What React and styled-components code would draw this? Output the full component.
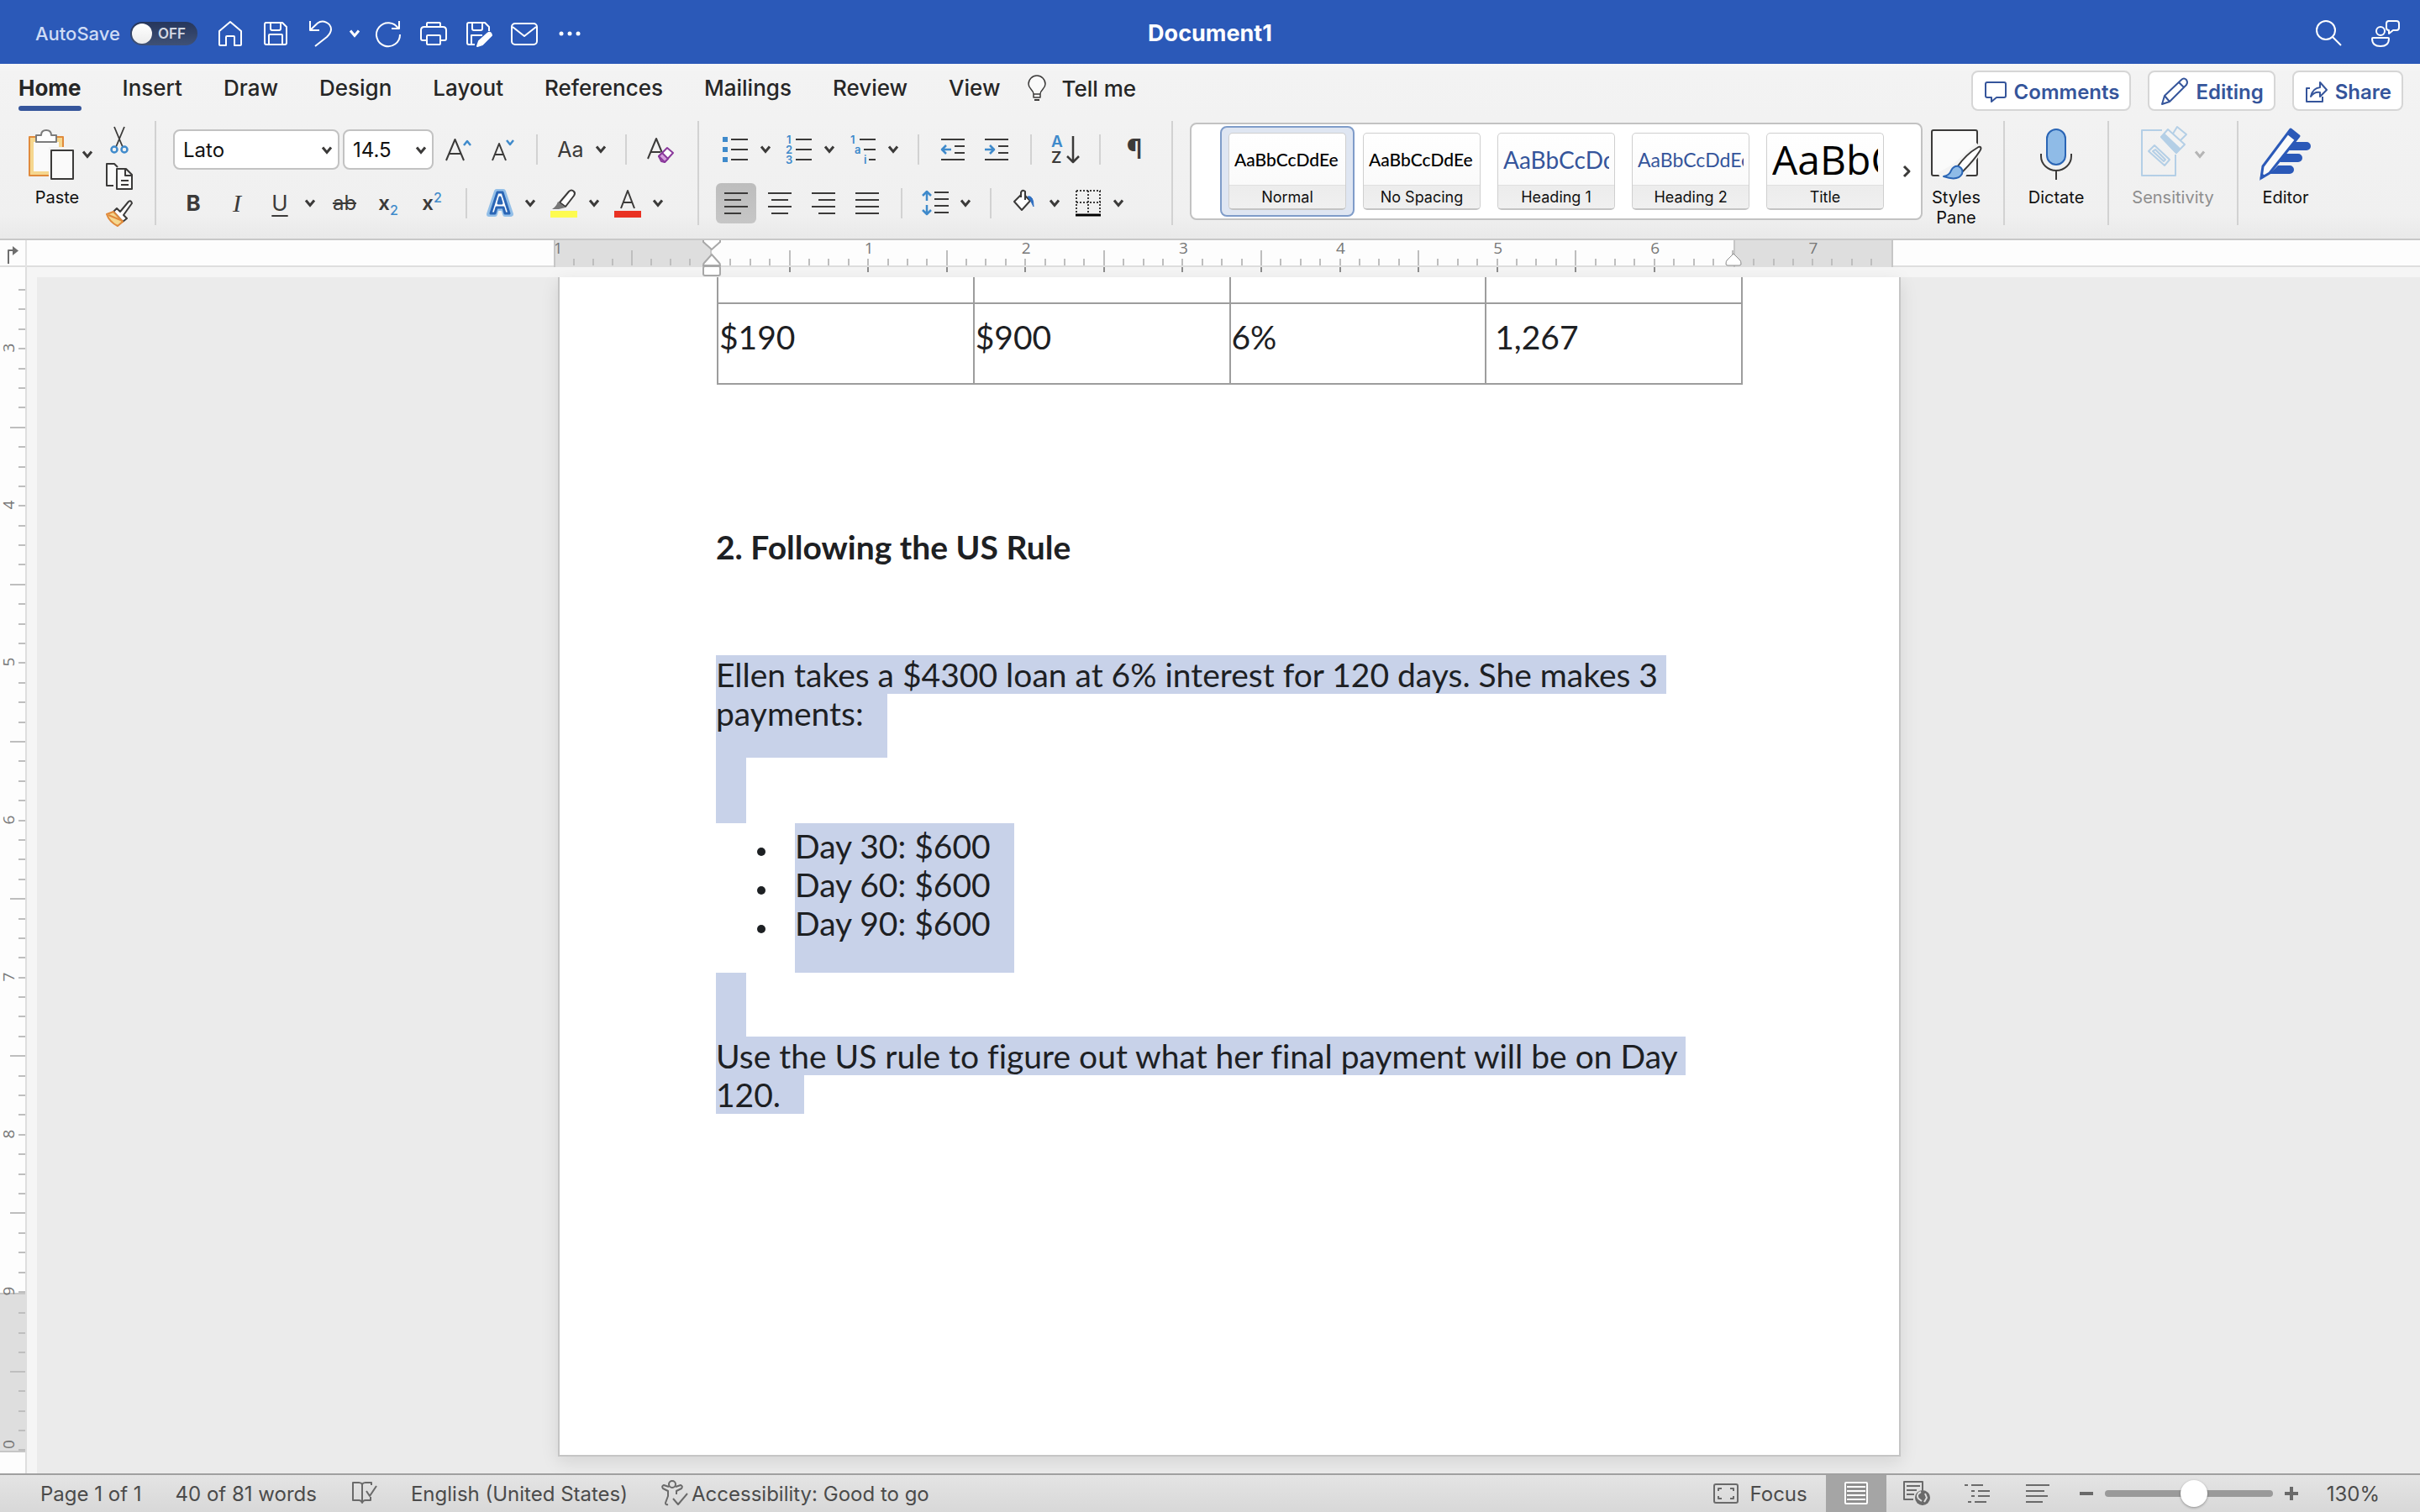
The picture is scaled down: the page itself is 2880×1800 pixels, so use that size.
import React from "react";
import styled, { createGlobalStyle, css } from "styled-components";

const ui = `Inter, "Liberation Sans", sans-serif`;
const doc = `Lato, "Open Sans", sans-serif`;
const ink = "#3b3a39";
const sky = "#3f8acb";
const navy = "#35559b";

const Global = createGlobalStyle`
  * { box-sizing: border-box; }
  html, body { margin: 0; }
  body { font-family: ${ui}; color: #262626; background: #ebebeb; }
  button { font: inherit; color: inherit; background: none; border: 0; padding: 0; cursor: pointer; }
  svg { display: block; flex: none; fill: none; overflow: visible; }
  p, h1, h2, ul { margin: 0; padding: 0; }
`;

const Shell = styled.div`
  height: 100vh;
  display: flex;
  flex-direction: column;
  overflow: hidden;
`;

/* ---------- title bar ---------- */
const TitleBar = styled.header`
  height: 76px;
  flex: none;
  padding: 4px 14px 0;
  display: grid;
  grid-template-columns: 1fr auto 1fr;
  align-items: center;
  background: #2b59b8;
  color: #fff;
`;
const QuickBar = styled.div`
  padding-left: 28px;
  display: flex;
  align-items: center;
`;
const AccountBar = styled.div`
  display: flex;
  justify-content: flex-end;
  gap: 14px;
`;
const DocTitle = styled.h1`
  font-size: 27px;
  line-height: 32px;
  font-weight: 700;
`;
const BarButton = styled.button`
  width: ${(p) => (p.$narrow ? 26 : 54)}px;
  height: 48px;
  display: flex;
  align-items: center;
  justify-content: center;
`;
const AutoSave = styled.label`
  display: flex;
  align-items: center;
  gap: 12px;
  margin-right: 12px;
  font-size: 22px;
  font-weight: 500;
  color: #cfdcf5;
  position: relative;
  input { position: absolute; opacity: 0; margin: 0; }
`;
const Track = styled.span`
  width: 80px;
  height: 28px;
  border-radius: 14px;
  padding-left: 2px;
  display: flex;
  align-items: center;
  gap: 7px;
  background: linear-gradient(#26365b, #3f5176);
  font-size: 17px;
  font-weight: 600;
  color: #d3d8e2;
`;
const Knob = styled.span`
  width: 24px;
  height: 24px;
  border-radius: 50%;
  background: linear-gradient(#fff, #ececec);
`;

/* ---------- ribbon ---------- */
const Ribbon = styled.section`
  flex: none;
  background: linear-gradient(#f7f7f7 0, #f3f3f3 10px, #f0f0f0 180px, #e9e9e9);
  border-bottom: 2px solid #c8c8c8;
`;
const TabRow = styled.div`
  height: 68px;
  padding: 0 20px 4px 22px;
  display: flex;
  justify-content: space-between;
  align-items: center;
`;
const Tabs = styled.nav`
  align-self: flex-start;
  display: flex;
  gap: 49px;
`;
const Tab = styled.button`
  height: 56px;
  padding-top: 13px;
  display: flex;
  flex-direction: column;
  justify-content: space-between;
  font-size: 26px;
  line-height: 32px;
  font-weight: ${(p) => (p.$active ? 700 : 500)};
  &::after {
    content: "";
    width: 100%;
    height: 6px;
    border-radius: 3px;
    background: ${(p) => (p.$active ? navy : "transparent")};
  }
`;
const TellMe = styled.button`
  height: 56px;
  padding-top: 2px;
  margin-left: -16px;
  display: flex;
  align-items: center;
  gap: 18px;
  font-size: 26px;
  font-weight: 500;
`;
const Actions = styled.div`
  display: flex;
  gap: 20px;
`;
const ActionButton = styled.button`
  height: 48px;
  padding: 2px 12px 0 14px;
  display: flex;
  align-items: center;
  gap: 9px;
  border: 2px solid #d6d6d6;
  border-radius: 8px;
  background: #fff;
  color: ${navy};
  font-size: 24px;
  font-weight: 600;
`;
const Tools = styled.div`
  height: 140px;
  display: flex;
  align-items: flex-start;
`;
const Rule = styled.span`
  flex: none;
  width: 2px;
  height: ${(p) => (p.$tall ? 124 : 36)}px;
  margin: 0 ${(p) => p.$gap ?? 14}px;
  background: #d2d2d2;
`;
const Clipboard = styled.div`
  width: 184px;
  padding: 6px 26px 0 34px;
  display: flex;
  justify-content: space-between;
`;
const SmallStack = styled.div`
  display: flex;
  flex-direction: column;
  gap: 12px;
`;
const SmallButton = styled.button`
  width: 32px;
  height: 32px;
`;
const Paste = styled.button`
  padding-top: 4px;
  width: 76px;
  display: flex;
  flex-direction: column;
  gap: 9px;
`;
const PasteTop = styled.span`
  display: flex;
  align-items: center;
  gap: 10px;
`;
const Caption = styled.span`
  font-size: 20px;
  line-height: 24px;
  color: #111;
  width: ${(p) => (p.$w ? p.$w + "px" : "auto")};
  text-align: center;
`;
const Group = styled.div`
  padding: 10px 18px 0;
  display: flex;
  flex-direction: column;
  gap: 16px;
`;
const Row = styled.div`
  height: 48px;
  display: flex;
  align-items: center;
`;
const IconButton = styled.button`
  width: 48px;
  height: 48px;
  margin: 0 2px;
  display: flex;
  align-items: center;
  justify-content: center;
  border-radius: 6px;
  color: ${ink};
  font-size: 26px;
  ${(p) => p.$on && css`background: linear-gradient(#bdbdbd, #c6c6c6);`}
`;
const Drop = styled.button`
  width: 76px;
  height: 48px;
  display: flex;
  align-items: center;
  justify-content: center;
  gap: 14px;
  color: ${ink};
`;
const Glyph = styled.span`
  width: 32px;
  text-align: center;
  font-size: ${(p) => p.$size ?? 26}px;
  line-height: 32px;
  font-weight: ${(p) => p.$weight ?? 400};
  font-family: ${(p) => (p.$serif ? `"Liberation Serif", serif` : "inherit")};
  font-style: ${(p) => (p.$serif ? "italic" : "normal")};
  text-decoration: ${(p) => p.$line ?? "none"};
  text-decoration-thickness: 2px;
  text-underline-offset: 5px;
  white-space: nowrap;
  sub, sup { font-size: 16px; line-height: 0; color: ${sky}; font-weight: 500; }
`;
const SelectBox = styled.label`
  position: relative;
  width: ${(p) => p.$w}px;
  height: 48px;
  margin-left: ${(p) => (p.$first ? 2 : 4)}px;
  margin-right: ${(p) => (p.$first ? 0 : 4)}px;
  select {
    width: 100%;
    height: 100%;
    appearance: none;
    border: 2px solid #c2c2c2;
    border-radius: 8px;
    background: #fff;
    padding: 0 10px;
    font: 400 24px ${ui};
    color: #111;
  }
  svg { position: absolute; right: 9px; top: 20px; pointer-events: none; }
`;

/* ---------- style gallery ---------- */
const Gallery = styled.div`
  height: 116px;
  margin: 2px 0 0 20px;
  padding-left: 34px;
  display: flex;
  align-items: center;
  border: 2px solid #c2c2c2;
  border-radius: 8px;
  background: #fff;
`;
const StyleButton = styled.button`
  width: 160px;
  height: 108px;
  padding: 6px 8px;
  border: 2px solid ${(p) => (p.$on ? "#7f9cc9" : "transparent")};
  border-radius: 8px;
  background: ${(p) => (p.$on ? "#dfe6f2" : "transparent")};
`;
const StyleCard = styled.span`
  height: 92px;
  display: flex;
  flex-direction: column;
  border: 1px solid #cfcfcf;
  border-bottom: 2px solid #c4c4c4;
  border-radius: 5px;
  overflow: hidden;
  background: linear-gradient(#fff, #f8f8f8);
`;
const Sample = styled.span`
  height: 61px;
  margin: 0 6px;
  overflow: hidden;
  white-space: nowrap;
  text-align: left;
  font-family: ${(p) => p.$font ?? doc};
  font-size: ${(p) => p.$size}px;
  line-height: 62px;
  font-weight: ${(p) => p.$weight ?? 400};
  color: ${(p) => p.$color ?? "#000"};
`;
const StyleName = styled.span`
  flex: 1;
  border-top: 1px solid #e0e0e0;
  background: linear-gradient(#ececec, #f0f0f0);
  font-size: 18px;
  line-height: 27px;
  color: #111;
`;
const MoreButton = styled.button`
  width: 34px;
  height: 108px;
  display: flex;
  align-items: center;
  justify-content: center;
`;
const Large = styled.button`
  width: ${(p) => p.$w}px;
  padding-top: 10px;
  display: flex;
  flex-direction: column;
  align-items: center;
  gap: 9px;
  ${(p) => p.$dim && css`${Caption} { color: #8e8e8e; }`}
`;
const LargeTop = styled.span`
  display: flex;
  align-items: center;
  gap: 10px;
`;

/* ---------- rulers ---------- */
const TopRuler = styled.div`
  flex: none;
  display: flex;
  height: 44px;
  background: linear-gradient(#fdfdfd 30px, #dedede 30px, #dedede 32px, #f5f5f5 32px);
`;
const TabWell = styled.button`
  width: 32px;
  height: 32px;
  border-right: 2px solid #e3e3e3;
  padding: 4px 0 0 8px;
`;
const Scale = styled.div`
  flex: 1;
  display: flex;
  justify-content: center;
`;
const HZone = styled.div`
  position: relative;
  flex: 0 0 ${(p) => p.$size}px;
  display: flex;
  height: ${(p) => (p.$shade ? 32 : 44)}px;
  ${(p) => p.$shade && css`
    overflow: hidden;
    border-right: 2px solid #c6c6c6;
    border-left: 2px solid #c6c6c6;
    background: #dedede;
  `}
`;
const HCell = styled.span`
  position: relative;
  flex: 1;
  display: flex;
  flex-direction: column;
  align-items: flex-end;
`;
const HTick = styled.i`
  width: 2px;
  height: ${(p) => (p.$tall ? 18 : 8)}px;
  margin-top: ${(p) => (p.$tall ? 12 : 22)}px;
  background: #bebebe;
`;
const HUnder = styled.i`
  width: 2px;
  height: 6px;
  margin-top: 2px;
  background: #8c8c8c;
`;
const HLabel = styled.b`
  position: absolute;
  top: 0;
  ${(p) => (p.$lead ? "left: 0" : "right: 0")};
  transform: translateX(${(p) => (p.$lead ? -20 : 50)}%);
  font: 400 19px/18px "Open Sans", sans-serif;
  color: #777;
`;
const Indent = styled.svg`
  position: absolute;
  z-index: 2;
  top: 0;
  left: ${(p) => (p.$end ? "100%" : "0")};
  margin-left: -11px;
`;
const Work = styled.div`
  flex: 1;
  min-height: 0;
  display: flex;
`;
const SideRuler = styled.div`
  flex: none;
  width: 44px;
  margin-top: -12px;
  background: linear-gradient(90deg, #fdfdfd 30px, #dedede 30px, #dedede 32px, #f5f5f5 32px);
`;
const VZone = styled.div`
  position: relative;
  width: 30px;
  display: flex;
  flex-direction: column;
  height: ${(p) => p.$size}px;
  z-index: ${(p) => (p.$shade ? 0 : 1)};
  ${(p) => p.$shade && css`
    overflow: hidden;
    border-top: 2px solid #c6c6c6;
    border-bottom: 2px solid #c6c6c6;
    background: #dedede;
  `}
`;
const VCell = styled.span`
  position: relative;
  flex: ${(p) => (p.$first ? `0 0 ${p.$first}px` : 1)};
  display: flex;
  align-items: flex-end;
  justify-content: flex-end;
`;
const VTick = styled.i`
  height: 2px;
  width: ${(p) => (p.$tall ? 18 : 8)}px;
  background: #bebebe;
`;
const VLabel = styled.b`
  position: absolute;
  left: 0;
  bottom: -8px;
  width: 20px;
  height: 20px;
  display: flex;
  justify-content: center;
  transform: rotate(-90deg);
  font: 400 19px/20px "Open Sans", sans-serif;
  color: #777;
`;

function HScale({ start, count, size, shade, lead, children }) {
  return (
    <HZone $size={size} $shade={shade}>
      {lead && <HLabel $lead>{lead}</HLabel>}
      {Array.from({ length: count }, (_, i) => {
        const n = start + i + 1;
        const last = shade && i === count - 1;
        return (
          <HCell key={n}>
            {!last && <HTick $tall={(n + 80) % 8 === 4} />}
            {!shade && n % 4 === 0 && i < count - 1 && <HUnder />}
            {n > 0 && n % 8 === 0 && <HLabel>{n / 8}</HLabel>}
          </HCell>
        );
      })}
      {children}
    </HZone>
  );
}
function VScale({ start, count, size, shade, first }) {
  return (
    <VZone $size={size} $shade={shade}>
      {Array.from({ length: count }, (_, i) => {
        const n = start + i + 1;
        return (
          <VCell key={n} $first={i === 0 ? first : 0}>
            <VTick $tall={n % 8 === 4} />
            {n % 8 === 0 && <VLabel>{n / 8}</VLabel>}
          </VCell>
        );
      })}
    </VZone>
  );
}

/* ---------- page ---------- */
const Canvas = styled.main`
  flex: 1;
  display: flex;
  justify-content: center;
  background: #ebebeb;
  padding: 0 0 20px 2px;
`;
const Sheet = styled.article`
  width: 1598px;
  padding: 0 187px 0 186px;
  border: solid #c5c5c5;
  border-width: 0 2px 2px;
  background: #fff;
  box-shadow: 0 6px 20px rgba(0, 0, 0, 0.1);
  font: 400 39px/46px ${doc};
  font-variant-ligatures: none;
  color: #1d2023;
`;
const Table = styled.table`
  width: 100%;
  margin-left: 1px;
  table-layout: fixed;
  border-collapse: collapse;
  td {
    height: 96px;
    padding: 16px 0 32px 1px;
    border: 2px solid #9d9d9d;
    vertical-align: top;
  }
  td:last-child { padding-left: 10px; }
  tr:first-child td { height: 31px; padding: 0; border-top: 0; }
`;
const Heading = styled.h2`
  margin: 170px 0 106px;
  font-size: 39px;
  line-height: 46px;
  font-weight: 700;
`;
const Sel = styled.span`
  display: block;
  width: fit-content;
  background: #c8d2e9;
  white-space: pre;
  padding-right: ${(p) => (p.$end ? 28 : 0)}px;
  padding-bottom: ${(p) => (p.$after ? 30 : 0)}px;
`;
const Blank = styled.p`
  width: 36px;
  height: ${(p) => p.$h}px;
  background: #c8d2e9;
`;
const List = styled.ul`
  margin-left: 94px;
  width: fit-content;
  padding: 4px 28px 36px 0;
  background: #c8d2e9;
  li { list-style: none; display: flex; align-items: center; }
  li::before {
    content: "";
    width: 10px;
    height: 10px;
    margin: 13px 35px 0 -45px;
    border-radius: 50%;
    background: #1d2023;
  }
`;

/* ---------- status bar ---------- */
const Status = styled.footer`
  flex: none;
  height: 46px;
  padding: 0 48px;
  display: flex;
  justify-content: space-between;
  border-top: 2px solid #a0a0a0;
  background: linear-gradient(#e4e4e4, #d8d8d8);
  color: #4b4b4b;
  font-size: 24px;
`;
const StatusSide = styled.div`
  display: flex;
  align-items: center;
  gap: ${(p) => p.$gap}px;
`;
const StatusButton = styled.button`
  display: flex;
  align-items: center;
  gap: ${(p) => p.$gap ?? 0}px;
  padding-right: ${(p) => p.$pad ?? 0}px;
`;
const ViewButton = styled.button`
  width: 72px;
  height: 44px;
  display: flex;
  align-items: center;
  justify-content: center;
  background: ${(p) => (p.$on ? "#a5a5a5" : "none")};
`;
const ZoomBox = styled.div`
  display: flex;
  align-items: center;
  gap: 14px;
  margin-left: 14px;
`;
const Slider = styled.input`
  width: 200px;
  height: 32px;
  margin: 0;
  appearance: none;
  background: none;
  &::-webkit-slider-runnable-track {
    height: 8px;
    border-radius: 4px;
    background: #9a9a9a;
  }
  &::-webkit-slider-thumb {
    appearance: none;
    width: 32px;
    height: 32px;
    margin-top: -12px;
    border-radius: 50%;
    background: #fff;
    box-shadow: 0 1px 3px rgba(0, 0, 0, 0.35);
  }
`;
const ZoomValue = styled.button`
  margin-left: 34px;
`;

/* ---------- icons ---------- */
const Chev = ({ c = ink }) => (
  <svg width="12" height="10" viewBox="0 0 12 10" stroke={c} strokeWidth="3">
    <path d="M1 1.5 6 7.5 11 1.5" />
  </svg>
);
const Ico = ({ w = 32, h = 32, s = ink, sw = 2, children }) => (
  <svg width={w} height={h} viewBox={`0 0 ${w} ${h}`} stroke={s} strokeWidth={sw} strokeLinejoin="round">
    {children}
  </svg>
);
const Home = () => <Ico s="#fff"><path d="M3 13 16 2 29 13V29Q29 30 28 30H21V20Q21 19 20 19H12Q11 19 11 20V30H4Q3 30 3 29Z" /></Ico>;
const Save = () => <Ico s="#fff"><path d="M4 3H24L29 8V27Q29 29 27 29H5Q3 29 3 27V5Q3 3 5 3ZM10 3V10Q10 12 12 12H20Q22 12 22 10V3M8 29V18Q8 17 9 17H23Q24 17 24 18V29" /></Ico>;
const Undo = () => <Ico s="#fff"><path d="M3 1V12H14M3 12 12 3.500C18-1 28 3 28 11 28 15 26 17 23 20L9 31" /></Ico>;
const Redo = () => <Ico s="#fff"><path d="M29 1V10H20M28 10A14 14 0 1 0 30 17" /></Ico>;
const Print = () => <Ico s="#fff"><path d="M8 8V4Q8 3 9 3H23Q24 3 24 4V8M8 24H3Q1 24 1 22V12Q1 8 5 8H27Q31 8 31 12V22Q31 24 29 24H24M9 18H23Q24 18 24 19V28Q24 29 23 29H9Q8 29 8 28V19Q8 18 9 18Z" /></Ico>;
const SavePen = () => <Ico s="#fff"><path d="M11 29H4Q2 29 2 27V5Q2 3 4 3H23L28 8V13M8 3V10Q8 12 10 12H18Q20 12 20 10V3M7 29V18H20" /><path fill="#fff" d="M26 16Q30 13 31 18L20 29 14 31 16 25Z" /></Ico>;
const Mail = () => <Ico w={34}><g stroke="#fff"><rect x="2" y="4" width="30" height="25" rx="4" /><path d="M3 8 17 19 31 8" /></g></Ico>;
const Dots = () => <Ico w={26} h={8} s="none"><g fill="#fff"><circle cx="3" cy="4" r="2.500" /><circle cx="13" cy="4" r="2.500" /><circle cx="23" cy="4" r="2.500" /></g></Ico>;
const Search = () => <Ico s="#fff"><circle cx="13" cy="12" r="11" /><path d="M21 20 31 30" /></Ico>;
const Person = () => <Ico w={34} s="#fff"><circle cx="11" cy="13" r="5" /><path d="M1 22Q1 21 2 21H20Q21 21 21 22 21 31 11 31 1 31 1 22ZM20 1H30Q33 1 33 4V9Q33 12 30 12H26L21 16V12Q18 12 18 9V4Q18 1 21 1Z" /></Ico>;
const Bulb = () => <Ico w={22} h={32}><path fill="#fafafa" strokeWidth="1.500" d="M7 23C7 18 1 17 1 11A10 10 0 0 1 21 11C21 17 15 18 15 23V27H7ZM7 23H15" /><path d="M8 30H14" /></Ico>;
const CommentIcon = () => <Ico w={26} h={28} s={navy}><path d="M3 3H23Q25 3 25 5V19Q25 21 23 21H14L8 26V21H3Q1 21 1 19V5Q1 3 3 3Z" /></Ico>;
const PencilIcon = () => <Ico w={32} h={34} s={navy}><path d="M1 32 4 22 24 3Q27 0 30 3 32 6 30 9L10 29ZM4 22 10 29M21 6 27 12" /></Ico>;
const ShareIcon = () => <Ico w={26} h={28} s={navy}><path d="M5 10H1V26H20V20M6 20Q8 10 17 9V3L25 12 17 20V15Q10 14 6 20Z" /></Ico>;
const PasteIcon = () => (
  <Ico w={54} h={60}>
    <path d="M1 9H41V55H1Z" fill="#f5d78f" stroke="#e08a3c" /><path d="M6 15H36V50H6Z" fill="#fafafa" stroke="none" />
    <path d="M9 15V7H15Q15 1 21 1T27 7H33V15Z" fill="#fff" stroke="#7c7c7c" />
    <path d="M24 21H54V60H24Z" fill="#f3f3f3" stroke="none" /><path d="M27 25H53V59H27Z" fill="#fafafa" />
  </Ico>
);
const Cut = () => <Ico><path d="M10 1 20 25M22 1 12 25" strokeWidth="1.800" /><g stroke={sky} strokeWidth="2.500"><circle cx="10" cy="28" r="3.500" /><circle cx="22" cy="28" r="3.500" /></g></Ico>;
const Copy = () => <Ico><path d="M9 27H1V1H10L14 5M13 7H24L31 14V31H13ZM23 7V15H31M18 21H27M18 26H27" fill="#fafafa" /></Ico>;
const Brush = () => <Ico><path d="M13 10 17 14 27 2Q30 0 31 4L21 18 25 22 20 26 9 14Z" fill="#fff" /><path d="M9 14 20 26 14 31Q4 26 1 17Z" fill="#f5d78f" stroke="#e08a3c" /><path d="M3 18 20 25" stroke="#e08a3c" /></Ico>;
const Lines = ({ rows }) => <Ico w={28} h={28}>{rows.map(([a, b], i) => <path key={i} d={`M${a} ${2 + i * 8}H${b}`} />)}</Ico>;
const Bullets = () => <Ico><path d="M11 4H31M11 16H31M11 28H31" /><path d="M1 1h6v6h-6ZM1 13h6v6h-6ZM1 25h6v6h-6Z" fill={sky} stroke="none" /></Ico>;
const T = styled.text`
  font: 600 ${(p) => p.$s ?? 13}px ${ui};
  fill: ${(p) => p.$c ?? sky};
  stroke: none;
`;
const Numbers = () => <Ico><path d="M12 4H31M12 16H31M12 28H31" /><T x="1" y="9">1</T><T x="0" y="21">2</T><T x="0" y="33">3</T></Ico>;
const Multi = () => <Ico><path d="M12 4H31M17 16H31M23 28H31" /><T x="1" y="9">1</T><T x="6" y="21">a</T><T x="17" y="33">i</T></Ico>;
const Outdent = () => <Ico w={28} h={28}><path d="M0 2H28M16 10H28M16 18H28M0 26H28" /><path d="M12 14H1M6 9 1 14 6 19" stroke={sky} strokeWidth="2.500" /></Ico>;
const IndentIcon = () => <Ico w={28} h={28}><path d="M0 2H28M16 10H28M16 18H28M0 26H28" /><path d="M0 14H11M6 9 11 14 6 19" stroke={sky} strokeWidth="2.500" /></Ico>;
const Sort = () => <Ico w={34} h={34}><T x="0" y="14" $s={19}>A</T><T x="0" y="33" $s={19} $c={ink}>Z</T><path d="M26 1V31M19 25 26 32 33 25" strokeWidth="2.500" /></Ico>;
const Spacing = () => <Ico><path d="M15 3H32M15 11H32M15 19H32M15 27H32" /><path d="M6 13V2M1 7 6 2 11 7M6 18V29M1 24 6 29 11 24" stroke={sky} strokeWidth="2.500" /></Ico>;
const Bucket = () => <Ico><path d="M12 6 4 14 13 24 23 13 17 7" fill="#fff" /><path d="M12 9V3Q14-1 17 2V12" /><path d="M20 8Q27 6 27 20 24 13 20 8Z" fill="#2f6fc1" stroke="#2f6fc1" strokeWidth="1" /></Ico>;
const Borders = () => <Ico><path d="M2 1H31M2 1V27M30 1V27M16 1V27M2 15H31" strokeDasharray="2 2" strokeLinejoin="miter" /><path d="M1 30H31" stroke="#000" strokeWidth="3" /></Ico>;
const BlueA = () => <Ico><path d="M3 29 12 2H20L29 29H22L20 22H12L10 29ZM14 16H18L16 9Z" fill="#fff" stroke="#93bfe8" strokeWidth="6" /><path d="M5 28 13 3H19L27 28H22L20 21H12L10 28ZM14 16H18L16 9Z" fill="#fff" stroke="#2a65b5" strokeWidth="3" /></Ico>;
const Marker = () => <Ico><path d="M11 15 22 2Q25-1 28 2 30 4 28 7L18 20Z" fill="#fff" /><path d="M9 14 18 21 10 23H2Q7 20 9 14Z" fill="#777" stroke="none" /><path d="M0 25H32V33H0Z" fill="#fdfb50" stroke="none" /></Ico>;
const RedA = () => <Ico><path d="M8 22 16 1 24 22M11 15H21" /><path d="M0 25H32V33H0Z" fill="#e93223" stroke="none" /></Ico>;
const Grow = () => <Ico><path d="M1 29 11.500 4 22 29M5 21H18" /><path d="M22 11 26 6 30 11" stroke={sky} strokeWidth="2.500" /></Ico>;
const Shrink = () => <Ico><path d="M4 29 12 9 20 29M7 22H17" /><path d="M21 5 25 10 29 5" stroke={sky} strokeWidth="2.500" /></Ico>;
const Eraser = () => <Ico><path d="M1 27 11 3 18 20M5 19H16" /><path d="M14 24 24 14 31 20 21 31 17 30Z" fill="#fff" stroke="#8b3a9c" /><path d="M14 24 18 20 25 27 21 31Z" fill="#d59fdc" stroke="#8b3a9c" /></Ico>;
const StylesIcon = () => (
  <Ico w={60} h={60}>
    <path d="M3 1H53Q55 1 55 3V53Q55 55 53 55H3Q1 55 1 53V3Q1 1 3 1Z" fill="#fafafa" />
    <path d="M8 52 27 41 54 16 62 24 40 58 12 59Z" fill="#f3f3f3" stroke="none" />
    <path d="M31 45C38 35 48 26 55 22 59 19 61 22 58 26 53 34 45 43 38 50Z" fill="#fff" />
    <path d="M15 56Q22 55 24 49 27 43 33 44 39 47 37 53 32 62 15 56Z" fill="#8fbbe7" stroke="#2a65b5" />
  </Ico>
);
const Mic = () => <Ico w={38} h={60}><rect x="8" y="0" width="22" height="42" rx="11" fill="#8fbbe7" stroke="#2a65b5" /><path d="M1 29V32A18 17 0 0 0 37 32V29M19 49V60" /></Ico>;
const Sens = () => (
  <Ico w={54} h={60} s="#b4cfe6">
    <path d="M25 1H1V55H41V30" /><path d="M9 26 16 19 34 36 28 43ZM14 26 17 24 29 36 27 38Z" />
    <path d="M24 9 32 0 52 18 42 28Z" fill="#f3f3f3" /><path d="M24 9 28 6 46 23 42 28Z" fill="#b4cfe6" /><path d="M38 5 43-3 54 6 47 13" />
  </Ico>
);
const EditorIcon = () => (
  <Ico w={62} h={60} s="none">
    <path d="M40 15H56A5 5 0 0 1 56 25H34ZM30 29H46A5 5 0 0 1 46 39H24ZM22 43H36A5 5 0 0 1 36 53H12Z" fill="#2b59b8" />
    <path d="M37 0 47 8 12 52 2 58 4 44Z" fill="#fafafa" stroke="#2b59b8" strokeWidth="3" /><path d="M37-1 48 8 43 14 33 6ZM2 52 7 55 0 61Z" fill="#2b59b8" />
  </Ico>
);
const gray = "#6a6a6a";
const Book = () => <Ico s={gray}><path d="M10 3H3V24H10Q13 24 14 27 15 24 18 24H24V20M14 27V5Q13 3 10 3M14 5Q15 3 18 3H25V6M19 13 23 19 31 7" /></Ico>;
const Access = () => <Ico s={gray}><circle cx="13" cy="5" r="4" /><path d="M9 8 3 6Q0 7 2 10L8 13V19L5 27Q5 30 8 29M17 8 23 6Q26 7 24 10L18 13V17M14 22 20 29 31 16" /></Ico>;
const FocusIcon = () => <Ico w={30} h={24} s={gray}><rect x="1" y="1" width="28" height="22" rx="2" /><path d="M6 9V6H10M20 6H24V9M24 15V18H20M10 18H6V15" /></Ico>;
const PrintView = () => <Ico w={28} h={28} s="#fff"><rect x="1" y="1" width="26" height="25" rx="1" fill="#8f8f8f" /><path d="M3 6H25M3 11H25M3 16H25M3 21H25" /></Ico>;
const WebView = () => <Ico s={gray}><path d="M12 23H1V2H23V12M4 7H20M4 12H16M4 17H13" /><circle cx="23" cy="21" r="9" fill={gray} stroke="none" /><path d="M21 14Q15 17 18 22L22 25M26 16 28 21 25 26" stroke="#ddd" /></Ico>;
const Outline = () => <Ico w={30} h={24} s={gray}><path d="M0 2H4M8 2H22M8 9H12M16 9H30M8 15H12M16 15H30M4 22H8M12 22H26" /></Ico>;
const Draft = () => <Ico w={28} h={24} s={gray}><path d="M0 2H28M0 9H22M0 15H26M0 22H20" /></Ico>;
const Minus = () => <Ico w={16} h={16} s={gray} sw={4}><path d="M0 8H16" /></Ico>;
const Plus = () => <Ico w={16} h={16} s={gray} sw={4}><path d="M0 8H16M8 0V16" /></Ico>;

const tabs = ["Home", "Insert", "Draw", "Design", "Layout", "References", "Mailings", "Review", "View"];
const styles = [
  { name: "Normal", size: 21, weight: 500, on: true },
  { name: "No Spacing", size: 21, weight: 500 },
  { name: "Heading 1", size: 28, color: "#35559b" },
  { name: "Heading 2", size: 23, color: "#35559b" },
  { name: "Title", size: 48, font: `"Open Sans", sans-serif` },
];
const DropTool = ({ label, children }) => (
  <Drop aria-label={label}>{children}<Chev /></Drop>
);

export default function App() {
  return (
    <Shell>
      <Global />
      <TitleBar>
        <QuickBar>
          <AutoSave>
            AutoSave
            <input type="checkbox" />
            <Track><Knob />OFF</Track>
          </AutoSave>
          <BarButton aria-label="Home"><Home /></BarButton>
          <BarButton aria-label="Save"><Save /></BarButton>
          <BarButton aria-label="Undo"><Undo /></BarButton>
          <BarButton $narrow aria-label="Undo list"><Chev c="#fff" /></BarButton>
          <BarButton aria-label="Redo"><Redo /></BarButton>
          <BarButton aria-label="Print"><Print /></BarButton>
          <BarButton aria-label="Save as"><SavePen /></BarButton>
          <BarButton aria-label="Mail"><Mail /></BarButton>
          <BarButton aria-label="More"><Dots /></BarButton>
        </QuickBar>
        <DocTitle>Document1</DocTitle>
        <AccountBar>
          <BarButton aria-label="Search"><Search /></BarButton>
          <BarButton aria-label="Account"><Person /></BarButton>
        </AccountBar>
      </TitleBar>

      <Ribbon>
        <TabRow>
          <Tabs>
            {tabs.map((t) => <Tab key={t} $active={t === "Home"}>{t}</Tab>)}
            <TellMe><Bulb />Tell me</TellMe>
          </Tabs>
          <Actions>
            <ActionButton><CommentIcon />Comments</ActionButton>
            <ActionButton><PencilIcon />Editing</ActionButton>
            <ActionButton><ShareIcon />Share</ActionButton>
          </Actions>
        </TabRow>
        <Tools>
          <Clipboard>
            <Paste>
              <PasteTop><PasteIcon /><Chev /></PasteTop>
              <Caption $w={68}>Paste</Caption>
            </Paste>
            <SmallStack>
              <SmallButton aria-label="Cut"><Cut /></SmallButton>
              <SmallButton aria-label="Copy"><Copy /></SmallButton>
              <SmallButton aria-label="Format painter"><Brush /></SmallButton>
            </SmallStack>
          </Clipboard>
          <Rule $tall $gap={0} />
          <Group>
            <Row>
              <SelectBox $w={198} $first><select aria-label="Font"><option>Lato</option></select><Chev /></SelectBox>
              <SelectBox $w={108}><select aria-label="Font size"><option>14.5</option></select><Chev /></SelectBox>
              <IconButton aria-label="Grow font"><Grow /></IconButton>
              <IconButton aria-label="Shrink font"><Shrink /></IconButton>
              <Rule />
              <DropTool label="Change case"><Glyph $size={25}>Aa</Glyph></DropTool>
              <Rule />
              <IconButton aria-label="Clear formatting"><Eraser /></IconButton>
            </Row>
            <Row>
              <IconButton><Glyph $weight={700}>B</Glyph></IconButton>
              <IconButton><Glyph $serif $size={30}>I</Glyph></IconButton>
              <DropTool label="Underline"><Glyph $line="underline">U</Glyph></DropTool>
              <IconButton><Glyph $line="line-through" $size={24}>ab</Glyph></IconButton>
              <IconButton><Glyph $weight={600} $size={24}>x<sub>2</sub></Glyph></IconButton>
              <IconButton><Glyph $weight={600} $size={24}>x<sup>2</sup></Glyph></IconButton>
              <Rule />
              <DropTool label="Text effects"><BlueA /></DropTool>
              <DropTool label="Highlight"><Marker /></DropTool>
              <DropTool label="Font color"><RedA /></DropTool>
            </Row>
          </Group>
          <Rule $tall $gap={0} />
          <Group>
            <Row>
              <DropTool label="Bullets"><Bullets /></DropTool>
              <DropTool label="Numbering"><Numbers /></DropTool>
              <DropTool label="Multilevel list"><Multi /></DropTool>
              <Rule />
              <IconButton aria-label="Decrease indent"><Outdent /></IconButton>
              <IconButton aria-label="Increase indent"><IndentIcon /></IconButton>
              <Rule />
              <IconButton aria-label="Sort"><Sort /></IconButton>
              <Rule />
              <IconButton><Glyph $size={32} $weight={500}>¶</Glyph></IconButton>
            </Row>
            <Row>
              <IconButton $on aria-label="Align left"><Lines rows={[[0, 28], [0, 20], [0, 28], [0, 20]]} /></IconButton>
              <IconButton aria-label="Center"><Lines rows={[[0, 28], [4, 24], [0, 28], [4, 24]]} /></IconButton>
              <IconButton aria-label="Align right"><Lines rows={[[0, 28], [8, 28], [0, 28], [8, 28]]} /></IconButton>
              <IconButton aria-label="Justify"><Lines rows={[[0, 28], [0, 28], [0, 28], [0, 28]]} /></IconButton>
              <Rule />
              <DropTool label="Line spacing"><Spacing /></DropTool>
              <Rule />
              <DropTool label="Shading"><Bucket /></DropTool>
              <DropTool label="Borders"><Borders /></DropTool>
            </Row>
          </Group>
          <Rule $tall $gap={0} />
          <Gallery>
            {styles.map((s) => (
              <StyleButton key={s.name} $on={s.on}>
                <StyleCard>
                  <Sample $size={s.size} $weight={s.weight} $color={s.color} $font={s.font}>AaBbCcDdEe</Sample>
                  <StyleName>{s.name}</StyleName>
                </StyleCard>
              </StyleButton>
            ))}
            <MoreButton aria-label="More styles">
              <Ico w={10} h={14} sw={3}><path d="M2 1 8 7 2 13" /></Ico>
            </MoreButton>
          </Gallery>
          <Large $w={80}><StylesIcon /><Caption>Styles Pane</Caption></Large>
          <Rule $tall $gap={16} />
          <Large $w={90}><Mic /><Caption>Dictate</Caption></Large>
          <Rule $tall $gap={16} />
          <Large $w={120} $dim><LargeTop><Sens /><Chev c="#b5b5b5" /></LargeTop><Caption>Sensitivity</Caption></Large>
          <Rule $tall $gap={16} />
          <Large $w={80}><EditorIcon /><Caption>Editor</Caption></Large>
        </Tools>
      </Ribbon>

      <TopRuler>
        <TabWell aria-label="Tab stop">
          <Ico w={16} h={22} s="#6e6e6e"><path d="M2 21V5H8" /><path d="M7 0 14 5.500 7 11Z" fill="#6e6e6e" stroke="none" /></Ico>
        </TabWell>
        <Scale>
          <HScale start={-8} count={8} size={188} shade lead="1" />
          <HScale start={0} count={52} size={1216}>
            <Indent width="22" height="44" viewBox="0 0 22 44" stroke="#a8a8a8" strokeWidth="2">
              <path d="M1 0V2L11 11 21 2V0M11 17 20 27Q21 28 21 30H1Q1 28 2 27Z" fill="#fff" />
              <rect x="1" y="31" width="20" height="11" rx="2" fill="#fff" />
            </Indent>
            <Indent $end width="22" height="32" viewBox="0 0 22 32" stroke="#8c8c8c" strokeWidth="1">
              <path d="M11 16 19 24Q20 25 20 29L18 30H4L2 29Q2 25 3 24Z" fill="#fff" />
            </Indent>
          </HScale>
          <HScale start={52} count={8} size={190} shade />
        </Scale>
      </TopRuler>

      <Work>
        <SideRuler>
          <VScale start={20} count={52} size={1221} first={28} />
          <VScale start={72} count={8} size={190} shade />
        </SideRuler>
        <Canvas>
          <Sheet>
            <Table>
              <tbody>
                <tr><td /><td /><td /><td /></tr>
                <tr><td>$190</td><td>$900</td><td>6%</td><td>1,267</td></tr>
              </tbody>
            </Table>
            <Heading>2. Following the US Rule</Heading>
            <p>
              <Sel>{"Ellen takes a $4300 loan at 6% interest for 120 days. She makes 3 "}</Sel>
              <Sel $end $after>payments:</Sel>
            </p>
            <Blank $h={78} />
            <List>
              <li>Day 30: $600</li>
              <li>Day 60: $600</li>
              <li>Day 90: $600</li>
            </List>
            <Blank $h={76} />
            <p>
              <Sel>{"Use the US rule to figure out what her final payment will be on Day "}</Sel>
              <Sel $end>120.</Sel>
            </p>
          </Sheet>
        </Canvas>
      </Work>

      <Status>
        <StatusSide $gap={40}>
          <StatusButton>Page 1 of 1</StatusButton>
          <StatusButton>40 of 81 words</StatusButton>
          <StatusButton aria-label="Proofing"><Book /></StatusButton>
          <StatusButton>English (United States)</StatusButton>
          <StatusButton $gap={4}><Access />Accessibility: Good to go</StatusButton>
        </StatusSide>
        <StatusSide $gap={0}>
          <StatusButton $gap={14} $pad={22}><FocusIcon />Focus</StatusButton>
          <ViewButton $on aria-label="Print layout"><PrintView /></ViewButton>
          <ViewButton aria-label="Web layout"><WebView /></ViewButton>
          <ViewButton aria-label="Outline"><Outline /></ViewButton>
          <ViewButton aria-label="Draft"><Draft /></ViewButton>
          <ZoomBox>
            <StatusButton aria-label="Zoom out"><Minus /></StatusButton>
            <Slider type="range" min="0" max="1000" defaultValue="536" aria-label="Zoom" />
            <StatusButton aria-label="Zoom in"><Plus /></StatusButton>
          </ZoomBox>
          <ZoomValue>130%</ZoomValue>
        </StatusSide>
      </Status>
    </Shell>
  );
}
